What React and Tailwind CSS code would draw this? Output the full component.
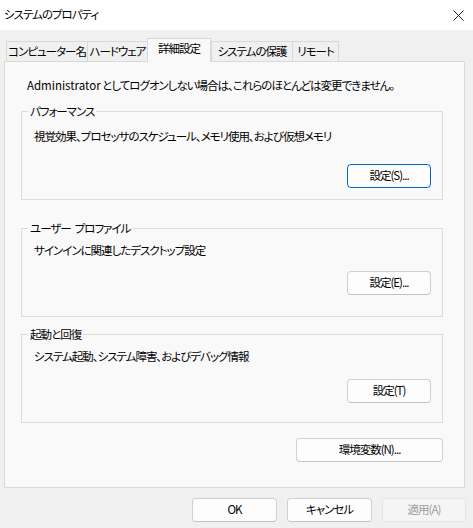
import React from "react";

const font = "font-['Yu_Gothic_UI','Noto_Sans_CJK_JP',sans-serif] [font-feature-settings:'palt']";

function Btn({ children, w = "w-[84px]", focus = false, disabled = false, className = "" }) {
  const base = "h-[24px] flex items-center justify-center rounded-[4px] text-[11.5px] leading-none whitespace-nowrap";
  const style = disabled
    ? "bg-[#f5f5f5] border border-[#e5e5e5] text-[#9d9d9d]"
    : focus
    ? "bg-[#fdfdfd] border border-[#0067c0] text-black"
    : "bg-[#fdfdfd] border border-[#d0d0d0] border-b-[#c2c2c2] text-black";
  return <div className={`${base} ${style} ${w} ${className}`}>{children}</div>;
}

function Group({ label, text, button, pt, mt, h = "h-[97px]", className = "", focus = false }) {
  return (
    <fieldset className={`border border-[#dcdcdc] ${h} ${className}`}>
      <legend className="ml-[6px] px-[2px] leading-[16px] whitespace-nowrap">{label}</legend>
      <div className={`flex flex-col pl-[12px] pr-[11px] ${pt}`}>
        <div className="leading-[16px] whitespace-nowrap">{text}</div>
        <Btn focus={focus} className={`self-end ${mt}`}>{button}</Btn>
      </div>
    </fieldset>
  );
}

function Tab({ children, selected = false, w }) {
  return selected ? (
    <div className={`${w} h-[24px] -mb-px z-10 bg-[#f9f9f9] border-t border-l border-r border-[#d9d9d9] flex items-center justify-center leading-none pb-[3px] whitespace-nowrap`}>
      {children}
    </div>
  ) : (
    <div className={`${w} h-[20px] bg-[#f0f0f0] border-t border-l border-r border-[#d9d9d9] -mr-px flex items-center justify-center leading-none whitespace-nowrap`}>
      {children}
    </div>
  );
}

export default function App() {
  return (
    <div className={`w-[473px] h-[528px] bg-[#f0f0f0] flex flex-col text-black text-[11.5px] tracking-[-1px] ${font}`}>
      <div className="h-[30px] bg-white flex items-center justify-between pl-[4px] pr-[9px] shrink-0">
        <span className="leading-none">システムのプロパティ</span>
        <svg width="11" height="11" viewBox="0 0 11 11">
          <path d="M0.5 0.5 L10.5 10.5 M10.5 0.5 L0.5 10.5" stroke="#1a1a1a" strokeWidth="1" fill="none" />
        </svg>
      </div>
      <div className="h-[31px] flex items-end pl-[6px] shrink-0 relative">
        <Tab w="w-[82px]">コンピューター名</Tab>
        <Tab w="w-[61px]">ハードウェア</Tab>
        <Tab w="w-[64px]" selected>詳細設定</Tab>
        <Tab w="w-[82px]">システムの保護</Tab>
        <Tab w="w-[47px]">リモート</Tab>
      </div>
      <div className="ml-[4px] mr-[8px] h-[427px] shrink-0 border border-[#d9d9d9] bg-[#f9f9f9] flex flex-col pl-[16px] pr-[21px] pt-[15px]">
        <div className="ml-[6px] leading-[16px] whitespace-nowrap">
          <span className="tracking-normal">Administrator</span> としてログオンしない場合は、これらのほとんどは変更できません。
        </div>
        <Group
          className="mt-[10px]"
          label="パフォーマンス"
          text="視覚効果、プロセッサのスケジュール、メモリ使用、および仮想メモリ"
          button="設定(S)..."
          pt="pt-[9px]"
          mt="mt-[20px]"
          focus
        />
        <Group
          className="mt-[20px]"
          label={<>ユーザー<span className="ml-[4px]">プロファイル</span></>}
          text="サインインに関連したデスクトップ設定"
          button="設定(E)..."
          pt="pt-[6px]"
          mt="mt-[13px]"
        />
        <Group
          className="mt-[9px]"
          label="起動と回復"
          text="システム起動、システム障害、およびデバッグ情報"
          button="設定(T)"
          pt="pt-[6px]"
          mt="mt-[15px]"
        />
        <Btn w="w-[147px]" className="self-end mt-[15px]">環境変数(N)...</Btn>
      </div>
      <div className="flex justify-end gap-[10px] pt-[10px] pr-[7px]">
        <Btn w="w-[85px]" className="h-[23px]">OK</Btn>
        <Btn w="w-[85px]" className="h-[23px]">キャンセル</Btn>
        <Btn w="w-[84px]" className="h-[23px]" disabled>適用(A)</Btn>
      </div>
    </div>
  );
}
